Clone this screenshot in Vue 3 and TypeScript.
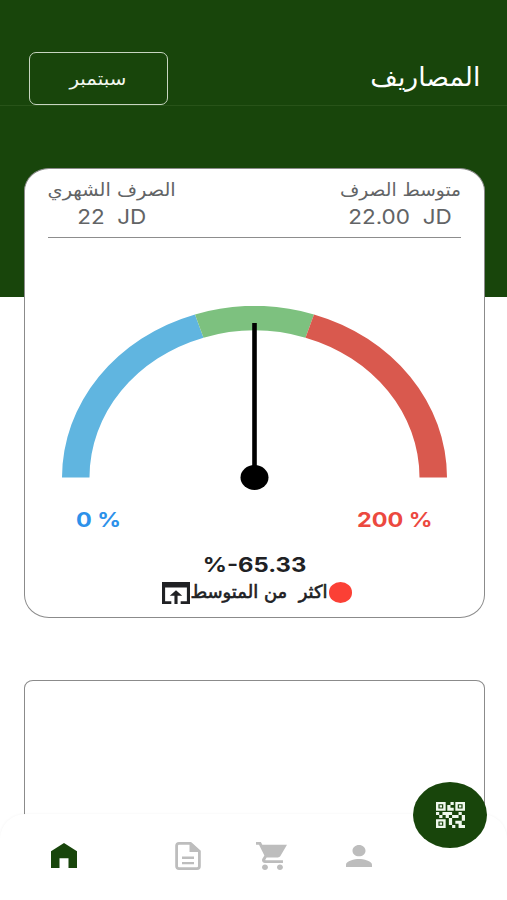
<script setup lang="ts">
interface Segment {
  from: number
  to: number
  color: string
}

const cx = 192.5
const cy = 171.5
const outer = { rx: 192.5, ry: 171.5 }
const inner = { rx: 165, ry: 147 }

const point = (r: { rx: number; ry: number }, deg: number): string => {
  const a = (deg * Math.PI) / 180
  return `${(cx - r.rx * Math.cos(a)).toFixed(2)} ${(cy - r.ry * Math.sin(a)).toFixed(2)}`
}

const arc = (s: Segment): string =>
  `M${point(outer, s.from)}A${outer.rx} ${outer.ry} 0 0 1 ${point(outer, s.to)}` +
  `L${point(inner, s.to)}A${inner.rx} ${inner.ry} 0 0 0 ${point(inner, s.from)}Z`

const segments: Segment[] = [
  { from: 0, to: 72, color: '#60b5e0' },
  { from: 72, to: 108, color: '#7dc17f' },
  { from: 108, to: 180, color: '#d9594e' },
]
</script>

<template>
  <div class="screen">
    <header class="top">
      <div class="bar">
        <button class="month"><span class="t t-month">سبتمبر</span></button>
        <h1 class="title"><span class="t t-title">المصاريف</span></h1>
      </div>
    </header>

    <main class="content">
      <section class="card">
        <div class="stats">
          <div class="stat monthly">
            <span class="t t-monthly">الصرف الشهري</span>
            <span class="num n-stat" dir="ltr">22&nbsp; JD</span>
          </div>
          <div class="stat average">
            <span class="t t-average">متوسط الصرف</span>
            <span class="num n-stat" dir="ltr">22.00&nbsp; JD</span>
          </div>
        </div>

        <svg class="gauge" width="385" height="185" viewBox="0 0 385 185">
          <path v-for="s in segments" :key="s.from" :d="arc(s)" :fill="s.color" />
          <rect x="190.2" y="17" width="4.6" height="156" />
          <ellipse cx="192.5" cy="171.5" rx="14" ry="12.5" />
        </svg>

        <div class="range">
          <span class="num low">0 %</span>
          <span class="num high">200 %</span>
        </div>

        <div class="percent"><span class="num p-value">%-65.33</span></div>
        <div class="status">
          <svg class="open" width="28" height="22" viewBox="3 4 18 16" preserveAspectRatio="none">
            <path d="M3 4v16h6v-2H5V8h14v10h-4v2h6V4H3zm9 6l-4 4h3v6h2v-6h3l-4-4z" />
          </svg>
          <span class="status-text" dir="rtl"><span class="t t-status">اكثر&nbsp; من المتوسط</span></span>
          <i class="dot"></i>
        </div>
      </section>

      <section class="card second"></section>
    </main>

    <nav class="nav">
      <svg class="home" width="26" height="25" viewBox="0 0 26 25">
        <path d="M0 8.3 13 0l13 8.3V25h-8.5v-9.7H8.5V25H0z" />
      </svg>
      <svg class="doc" width="26" height="28" viewBox="0 0 26 28">
        <path d="M4 1.4H15.5L24.4 9.3V24.2Q24.4 26.6 22 26.6H4Q1.6 26.6 1.6 24.2V3.8Q1.6 1.4 4 1.4Z" fill="none" stroke="#bdbdbd" stroke-width="2.8" />
        <path d="M14.5 1H16.5L25 8.8V10H14.5zM7 14.6h12v2.3H7zM7 19.9h12v2.3H7z" />
      </svg>
      <svg class="cart" width="31" height="28" viewBox="1 2 20.7 20" preserveAspectRatio="none">
        <path d="M7 18c-1.1 0-1.99.9-1.99 2S5.9 22 7 22s2-.9 2-2-.9-2-2-2zM1 2v2h2l3.6 7.59-1.35 2.45c-.16.28-.25.61-.25.96 0 1.1.9 2 2 2h12v-2H7.42c-.14 0-.25-.11-.25-.25l.03-.12.9-1.63h7.45c.75 0 1.41-.41 1.75-1.03L21.7 4H5.21l-.94-2H1zm16 16c-1.1 0-1.99.9-1.99 2s.89 2 1.99 2 2-.9 2-2-.9-2-2-2z" />
      </svg>
      <svg class="person" width="26" height="22.5" viewBox="4 4 16 16" preserveAspectRatio="none">
        <path d="M12 12c2.21 0 4-1.79 4-4s-1.79-4-4-4-4 1.79-4 4 1.79 4 4 4zm0 2c-2.67 0-8 1.34-8 4v2h16v-2c0-2.66-5.33-4-8-4z" />
      </svg>
    </nav>

    <button class="fab">
      <svg width="29" height="26" viewBox="3 3 18 18" preserveAspectRatio="none">
        <path d="M15 21h-2v-2h2v2zm-2-7h-2v5h2v-5zm8-2h-2v4h2v-4zm-2-2h-2v2h2v-2zM7 12H5v2h2v-2zm-2-2H3v2h2v-2zm7-5h2V3h-2v2zm-7.5-.5v3h3v-3h-3zM9 9H3V3h6v6zm-4.5 7.5v3h3v-3h-3zM9 21H3v-6h6v6zm7.5-16.5v3h3v-3h-3zM21 9h-6V3h6v6zm-2 10v-3h-4v2h2v3h4v-2h-2zm-2-7h-4v2h4v-2zm-4-2H7v2h2v2h2v-2h2v-2zm1-1V7h-2V5h-2v4h4zM6.75 5.25h-1.5v1.5h1.5v-1.5zm0 12h-1.5v1.5h1.5v-1.5zm12-12h-1.5v1.5h1.5v-1.5z" />
      </svg>
    </button>
  </div>
</template>

<style>
body {
  background: #fff;
}
</style>

<style scoped>
.screen {
  position: relative;
  width: 507px;
  height: 900px;
  overflow: hidden;
  background: #fff;
  font-family: Inter, 'DejaVu Sans', sans-serif;
}
.screen * {
  box-sizing: border-box;
}
.top {
  height: 296.5px;
  background: #18450b;
}
.bar {
  display: flex;
  justify-content: space-between;
  align-items: flex-end;
  height: 106px;
  padding: 0 27px 0 28.5px;
  border-bottom: 1.5px solid #285319;
}
.month {
  display: flex;
  justify-content: center;
  align-items: center;
  width: 139px;
  height: 53px;
  margin-bottom: 0;
  padding: 0;
  border: 1.5px solid #c7d5c1;
  border-radius: 7px;
  background: #18450b;
  color: #f2f8f0;
  font-family: inherit;
}
.title {
  margin: 0 0 10px;
  height: 40px;
  line-height: 40px;
  color: #fff;
  font-weight: 400;
}
.t,
.num {
  display: inline-block;
  white-space: pre;
}
.t {
  font-family: 'DejaVu Sans', sans-serif;
}
.t-month {
  font-size: 18px;
  transform: scaleX(1.1);
}
.t-title {
  font-size: 26px;
  transform: scaleX(1.025);
  transform-origin: right;
}
.content {
  display: flex;
  flex-direction: column;
  gap: 62px;
  margin-top: -129px;
  padding: 0 22px 0 24px;
}
.card {
  position: relative;
  display: flex;
  flex-direction: column;
  width: 461px;
  height: 450.5px;
  padding: 0 23px;
  border: 1px solid #8b8b8b;
  border-radius: 25px / 23px;
  background: #fff;
}
.second {
  height: 240px;
  border-radius: 9px / 8px;
}
.stats {
  display: flex;
  justify-content: space-between;
  height: 69px;
  padding-top: 7px;
  border-bottom: 1px solid #8d8d8d;
  color: #626466;
}
.stat {
  display: flex;
  flex-direction: column;
  align-items: center;
}
.monthly {
  width: 128px;
}
.average {
  width: 122px;
}
.stat .t {
  height: 27px;
  line-height: 27px;
  font-size: 18px;
}
.t-monthly {
  transform: scaleX(1.075);
}
.t-average {
  transform: scaleX(1.035);
}
.stat .num {
  height: 28px;
  line-height: 28px;
  font-size: 20px;
}
.n-stat {
  transform: scaleX(1.125);
}
.gauge {
  display: block;
  margin: 68px 0 0 14px;
}
.range {
  display: flex;
  justify-content: space-between;
  padding: 17px 28px 0;
  height: 44px;
}
.range .num {
  height: 24px;
  line-height: 24px;
  font-size: 20px;
  font-weight: 700;
}
.low {
  color: #2d91ea;
  transform: scaleX(1.17);
  transform-origin: left;
}
.high {
  color: #ec493f;
  transform: scaleX(1.17);
  transform-origin: right;
}
.percent {
  display: flex;
  justify-content: center;
  margin-top: 16px;
  height: 28px;
  color: #202124;
}
.p-value {
  line-height: 28px;
  font-size: 20px;
  font-weight: 700;
  transform: scaleX(1.19);
}
.status {
  display: flex;
  justify-content: center;
  align-items: center;
  height: 28px;
  padding-left: 4px;
  color: #202124;
}
.open {
  fill: #202124;
  flex: none;
}
.status-text {
  display: flex;
  justify-content: center;
  width: 139px;
  height: 30px;
  line-height: 28px;
}
.t-status {
  font-size: 18px;
  -webkit-text-stroke: 0.6px #202124;
}
.dot {
  width: 23px;
  height: 20.5px;
  border-radius: 50%;
  background: #fb4035;
}
.nav {
  position: absolute;
  left: 0;
  bottom: 0;
  display: flex;
  align-items: center;
  width: 507px;
  height: 86px;
  padding: 0 0 2px 51px;
  border-radius: 25px 25px 0 0;
  background: #fff;
  box-shadow: 0 0 3px rgba(0, 0, 0, 0.05);
}
.nav svg {
  flex: none;
  fill: #bdbdbd;
}
.nav .home {
  margin-bottom: 1px;
  fill: #18450b;
}
.doc {
  margin-left: 97.5px;
}
.cart {
  margin-left: 55.5px;
}
.person {
  margin-left: 59px;
}
.fab {
  position: absolute;
  left: 413px;
  top: 782px;
  display: flex;
  justify-content: center;
  align-items: center;
  width: 74px;
  height: 66px;
  padding: 0;
  border: 0;
  border-radius: 50%;
  background: #18450b;
}
.fab svg {
  fill: #eff8ed;
}
</style>
